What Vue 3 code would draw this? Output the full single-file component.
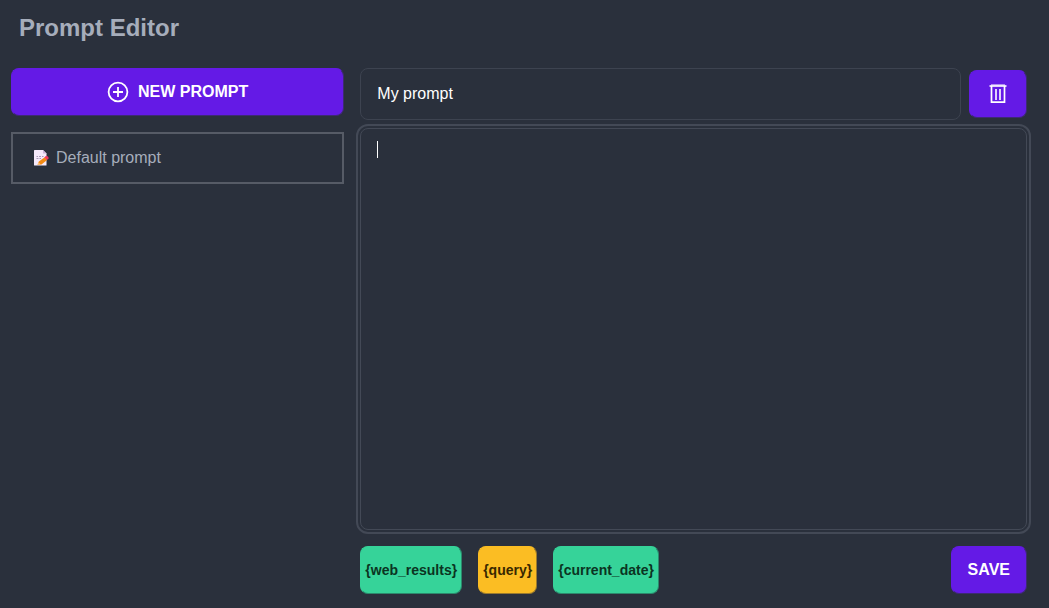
<script setup>
import { ref } from 'vue'

const prompts = ref([{ name: 'Default prompt' }])
const name = ref('My prompt')
const text = ref('')
const variables = [
  { label: '{web_results}', tone: 'green' },
  { label: '{query}', tone: 'amber' },
  { label: '{current_date}', tone: 'green' },
]
</script>

<template>
  <main class="page">
    <h1 class="title">Prompt Editor</h1>
    <div class="columns">
      <aside class="sidebar">
        <button type="button" class="btn primary new">
          <svg width="22" height="22" viewBox="0 0 22 22" fill="none" stroke="currentColor" stroke-width="1.8" aria-hidden="true">
            <circle cx="11" cy="11" r="9.400" />
            <path d="M11 6v10M6 11h10" />
          </svg>
          New prompt
        </button>
        <ul class="list">
          <li v-for="item in prompts" :key="item.name">
            <button type="button" class="item">
              <svg width="16" height="16" viewBox="0 0 16 16" aria-hidden="true">
                <path d="M1.500 0H10l3.500 3.500V15.500H1.500Q1 15.500 1 15V.5Q1 0 1.500 0z" fill="#f5e9fb" />
                <path d="M10 0v3.500h3.500z" fill="#cdb6dc" />
                <path d="M3.500 6.500h1.500m1 0h2m1 0h1.500M3.500 8.500h2m1 0h1.500" stroke="#a99bb8" stroke-width="1" />
                <path d="M4.500 14.800l1.300-3.300 6-4.200 2.300 2.700-5.600 4.500z" fill="#f28a13" />
                <path d="M4.500 14.800l1-2.600 1.800 2.100z" fill="#ffc680" />
                <path d="M11.400 7.400l1.400-1.300q1.700-.5 2.700 1.200v1.200l-1.500 1.400z" fill="#f03a5f" />
              </svg>
              {{ item.name }}
            </button>
          </li>
        </ul>
      </aside>
      <section class="editor">
        <div class="row">
          <input v-model="name" type="text" class="field" aria-label="Prompt name" />
          <button type="button" class="btn primary trash" aria-label="Delete prompt">
            <svg width="24" height="20" viewBox="0 0 24 20" fill="none" stroke="currentColor" aria-hidden="true">
              <path d="M3.500 2h17" stroke-width="1.600" />
              <path d="M5 1h14" stroke-width="1" />
              <path d="M5.500 2v16.200h13V2" stroke-width="1.700" />
              <path d="M10 5v11M14 5v11" stroke-width="1.600" />
            </svg>
          </button>
        </div>
        <div class="body">
          <textarea v-model="text" class="area" aria-label="Prompt text"></textarea>
          <span v-if="!text" class="caret" aria-hidden="true"></span>
        </div>
        <div class="row footer">
          <div class="tags">
            <button v-for="v in variables" :key="v.label" type="button" class="btn tag" :class="v.tone">{{ v.label }}</button>
          </div>
          <button type="button" class="btn primary save">Save</button>
        </div>
      </section>
    </div>
  </main>
</template>

<style>
body {
  background: #2a303c;
}
</style>

<style scoped>
.page {
  box-sizing: border-box;
  display: flex;
  flex-direction: column;
  min-height: 100vh;
  padding: 12px 22px 14px 11px;
  color: #a6adbb;
  font: 16px/24px "Liberation Sans", Arial, sans-serif;
}
.title {
  margin: 0 0 24px 8px;
  font-size: 24px;
  line-height: 32px;
}
.columns {
  flex: 1;
  display: grid;
  grid-template-columns: 1fr 2fr;
  gap: 16px;
}
button,
input,
textarea {
  box-sizing: border-box;
  font: inherit;
  color: inherit;
}
.btn {
  display: flex;
  align-items: center;
  justify-content: center;
  height: 48px;
  padding: 0 16px;
  border: 1px solid transparent;
  border-radius: 8px;
  font-weight: 700;
}
.primary {
  border-color: #641ae6 #3d2a73 #3d2a73 #641ae6;
  background: #641ae6;
  color: #fff;
  text-transform: uppercase;
}
.new {
  width: 100%;
  gap: 9px;
}
.list {
  list-style: none;
  margin: 16px 0 0;
  padding: 0;
}
.item {
  display: flex;
  align-items: center;
  gap: 7px;
  width: 100%;
  height: 52px;
  padding: 0 20px;
  border: 2px solid #565b66;
  background: none;
  text-align: left;
}
.editor {
  display: flex;
  flex-direction: column;
  gap: 8px;
  min-width: 0;
}
.row {
  display: flex;
  align-items: center;
  gap: 8px;
}
.field {
  flex: 1;
  min-width: 0;
  height: 52px;
  padding: 0 16px;
  border: 1px solid #3d4350;
  border-radius: 8px;
  background: #2a303c;
  color: #fff;
}
.body {
  position: relative;
  flex: 1;
  display: flex;
}
.area {
  flex: 1;
  min-height: 80px;
  padding: 8px 16px;
  border: 1px solid #434956;
  border-radius: 8px;
  outline: 2px solid #434956;
  outline-offset: 2px;
  background: #2a303c;
  color: #fff;
  caret-color: transparent;
  resize: none;
}
.caret {
  position: absolute;
  left: 17px;
  top: 13px;
  width: 1px;
  height: 17px;
  background: #fff;
  pointer-events: none;
}
.footer {
  justify-content: space-between;
  margin-top: 8px;
}
.tags {
  display: flex;
  gap: 16px;
}
.tag {
  padding: 0 4px;
  font-size: 14px;
}
.green {
  border-color: #36d399 #2c8a6d #2c8a6d #36d399;
  background: #36d399;
  color: #0b3422;
}
.amber {
  border-color: #fbbd23 #9a7a2e #9a7a2e #fbbd23;
  background: #fbbd23;
  color: #382800;
}
</style>
